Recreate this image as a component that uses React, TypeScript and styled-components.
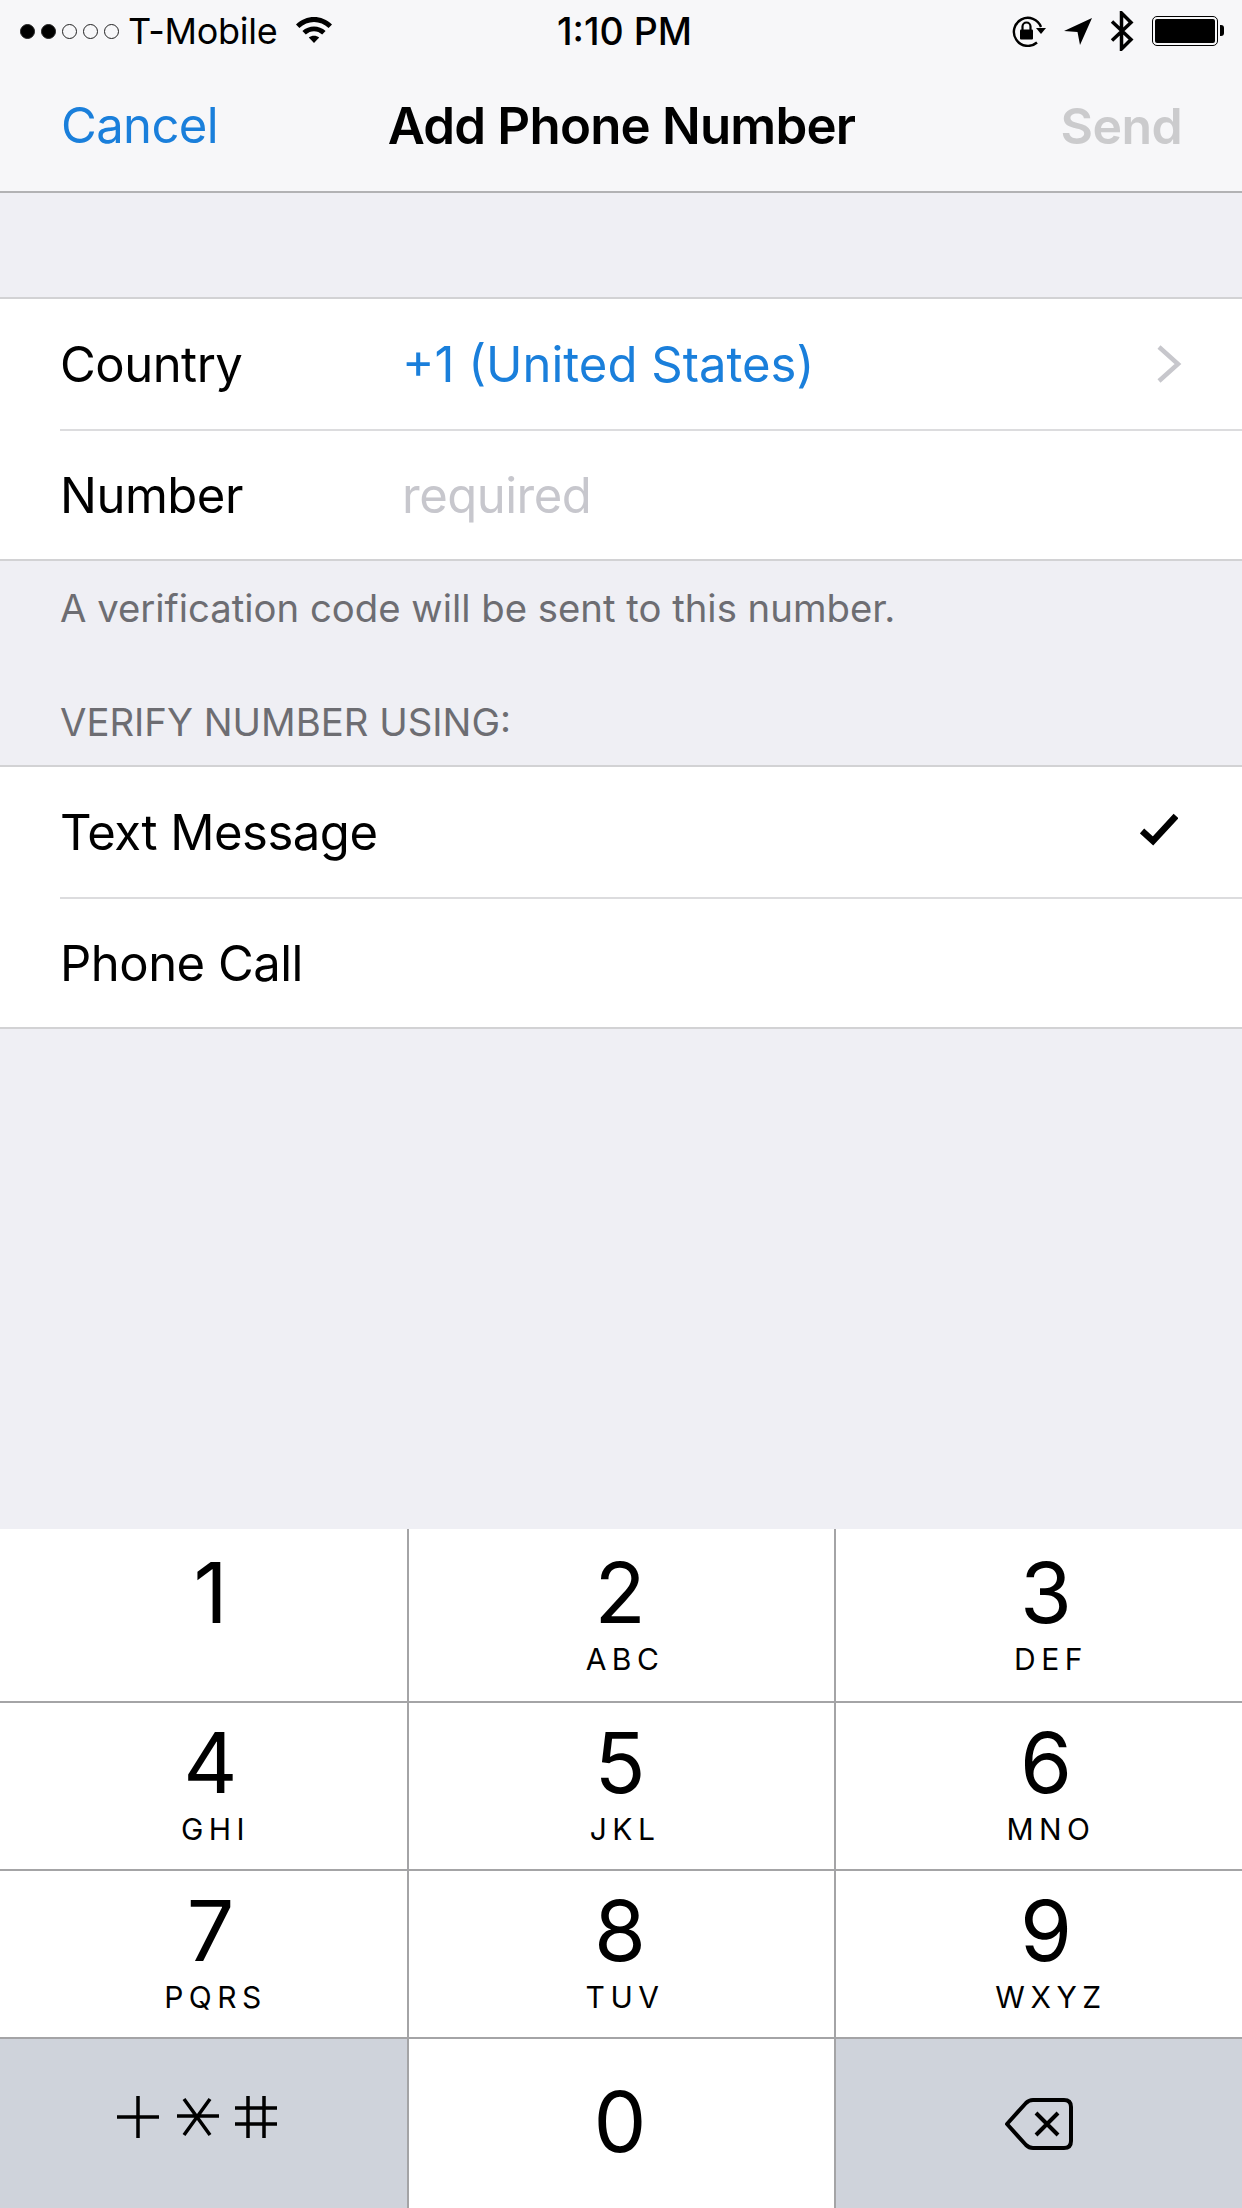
import { FunctionComponent } from "react"
import styled, { createGlobalStyle } from "styled-components"

const GlobalStyle = createGlobalStyle`
  html, body {
    margin: 0;
    padding: 0;
    background: #efeff4;
  }
  * {
    box-sizing: border-box;
  }
`

const KEYS = [
  { digit: "1", letters: "" },
  { digit: "2", letters: "ABC" },
  { digit: "3", letters: "DEF" },
  { digit: "4", letters: "GHI" },
  { digit: "5", letters: "JKL" },
  { digit: "6", letters: "MNO" },
  { digit: "7", letters: "PQRS" },
  { digit: "8", letters: "TUV" },
  { digit: "9", letters: "WXYZ" },
]

const App: FunctionComponent = () => {
  return (
    <Screen>
      <GlobalStyle />
      <Header>
        <StatusBar>
          <StatusLeft>
            <Signal>
              <Dot $on />
              <Dot $on />
              <Dot />
              <Dot />
              <Dot />
            </Signal>
            <Carrier>T-Mobile</Carrier>
            <svg width="38" height="28" viewBox="0 0 38 28">
              <path d="M1 9.5C11 -0.5 27 -0.5 37 9.5L33.6 13C25.5 5 12.5 5 4.4 13Z" />
              <path d="M7.4 16C13.8 10 24.2 10 30.6 16L27.2 19.5C22.5 15 15.5 15 10.8 19.5Z" />
              <path d="M13.8 22.5C16.8 20 21.2 20 24.2 22.5L19 28Z" />
            </svg>
          </StatusLeft>
          <Clock>1:10 PM</Clock>
          <StatusRight>
            <svg width="35" height="31" viewBox="0 0 35 31">
              <path d="M30 11A14 14 0 1 0 26 26.500" fill="none" stroke="#000" strokeWidth="2.4" />
              <path d="M25 12H35L30 18Z" />
              <rect x="9" y="13.500" width="13" height="10" rx="1" />
              <path d="M11.500 14V10.500A4 4 0 0 1 19.500 10.500V14" fill="none" stroke="#000" strokeWidth="2.200" />
            </svg>
            <svg width="28" height="27" viewBox="0 0 28 27">
              <path d="M28 0L16 27L13.500 14L0 13Z" />
            </svg>
            <svg width="24" height="40" viewBox="0 0 24 40">
              <path d="M2 10.500L21 28.500L11.500 38V2L21 11.500L2 29.500" fill="none" stroke="#000" strokeWidth="3.500" />
            </svg>
            <Battery>
              <BatteryFill />
              <BatteryNub />
            </Battery>
          </StatusRight>
        </StatusBar>
        <NavBar>
          <NavAction $tone="#1a7fdb">Cancel</NavAction>
          <NavTitle>Add Phone Number</NavTitle>
          <NavAction $tone="#cbcbcd" $bold>
            Send
          </NavAction>
        </NavBar>
      </Header>

      <Group $top={104}>
        <Row>
          <RowLabel>Country</RowLabel>
          <RowValue>+1 (United States)</RowValue>
          <svg width="26" height="38" viewBox="0 0 26 38">
            <path d="M3 2L22 19L3 36" fill="none" stroke="#c7c7cc" strokeWidth="4.500" />
          </svg>
        </Row>
        <Row>
          <RowLabel>Number</RowLabel>
          <RowValue $placeholder>required</RowValue>
        </Row>
      </Group>

      <FootNote>A verification code will be sent to this number.</FootNote>
      <SectionTitle>VERIFY NUMBER USING:</SectionTitle>

      <Group>
        <Row>
          <RowLabel $grow>Text Message</RowLabel>
          <CheckIcon width="38" height="34" viewBox="0 0 38 34">
            <path d="M2 18L13 28L36 3" fill="none" stroke="#000" strokeWidth="6.500" />
          </CheckIcon>
        </Row>
        <Row>
          <RowLabel $grow>Phone Call</RowLabel>
        </Row>
      </Group>

      <Keypad>
        {KEYS.map((key) => (
          <Key key={key.digit}>
            <Digit>{key.digit}</Digit>
            <Letters>{key.letters}</Letters>
          </Key>
        ))}
        <SideKey>
          <SymbolsIcon width="162" height="44" viewBox="0 0 162 44" fill="none" stroke="#000" strokeWidth="3.500">
            <path d="M1 22H43M22 1V43" />
            <path d="M61 21H103M68 4L94 40M94 4L68 40" />
            <path d="M119 13H161M119 29H161M132 1V43M148 1V43" />
          </SymbolsIcon>
        </SideKey>
        <ZeroKey>
          <Digit>0</Digit>
        </ZeroKey>
        <SideKey>
          <svg width="70" height="52" viewBox="0 0 70 52" fill="none" stroke="#000" strokeWidth="4">
            <path d="M3 26L22 5Q25 2 29 2H60Q67 2 67 9V43Q67 50 60 50H29Q25 50 22 47Z" strokeLinejoin="round" />
            <path d="M32 15L54 37M54 15L32 37" />
          </svg>
        </SideKey>
      </Keypad>
    </Screen>
  )
}

const Screen = styled.div`
  width: 1242px;
  height: 2208px;
  display: flex;
  flex-direction: column;
  overflow: hidden;
  background: #efeff4;
  color: #000;
  font-family: Inter, "Liberation Sans", sans-serif;
`

const Header = styled.header`
  height: 193px;
  flex: none;
  display: flex;
  flex-direction: column;
  background: #f7f7f9;
  border-bottom: 2px solid #b2b2b4;
`

const StatusBar = styled.div`
  height: 62px;
  padding: 0 17px 0 20px;
  display: grid;
  grid-template-columns: 1fr auto 1fr;
  align-items: center;
`

const StatusLeft = styled.div`
  display: flex;
  align-items: center;
  gap: 18px;

  svg {
    margin-top: -5px;
  }
`

const Signal = styled.div`
  display: flex;
  gap: 6px;
  margin-right: -9px;
`

const Dot = styled.span<{ $on?: boolean }>`
  width: 15px;
  height: 15px;
  border-radius: 50%;
  border: 1.5px solid #222;
  background: ${(p) => (p.$on ? "#000" : "transparent")};
`

const Carrier = styled.span`
  font-size: 36px;
  letter-spacing: -0.3px;
`

const Clock = styled.span`
  font-size: 37.5px;
  font-weight: 500;
  padding-left: 4px;
`

const StatusRight = styled.div`
  display: flex;
  align-items: center;
  justify-content: flex-end;
  gap: 18px;
`

const Battery = styled.div`
  position: relative;
  width: 66px;
  height: 30px;
  margin-right: 7px;
  padding: 2px;
  border: 1.5px solid #000;
  border-radius: 5px;
`

const BatteryFill = styled.div`
  height: 100%;
  background: #000;
  border-radius: 2px;
`

const BatteryNub = styled.span`
  position: absolute;
  top: 8px;
  right: -7px;
  width: 4px;
  height: 11px;
  background: #000;
  border-radius: 0 3px 3px 0;
`

const NavBar = styled.div`
  flex: 1;
  padding: 0 60px 2px 61px;
  display: grid;
  grid-template-columns: 1fr auto 1fr;
  align-items: center;

  & > span:last-child {
    justify-self: end;
  }
`

const NavAction = styled.span<{ $tone: string; $bold?: boolean }>`
  font-size: ${(p) => (p.$bold ? 50 : 49)}px;
  letter-spacing: -0.6px;
  color: ${(p) => p.$tone};
  font-weight: ${(p) => (p.$bold ? 600 : 400)};
`

const NavTitle = styled.h1`
  margin: 0;
  font-size: 51px;
  font-weight: 600;
  letter-spacing: -0.8px;
`

const Group = styled.section<{ $top?: number }>`
  flex: none;
  margin-top: ${(p) => p.$top ?? 0}px;
  background: #fff;
  border-top: 2px solid #d2d2d4;
  border-bottom: 2px solid #d2d2d4;
`

const Row = styled.div`
  height: 130px;
  margin-left: 60px;
  padding-right: 60px;
  display: flex;
  align-items: center;

  & + & {
    border-top: 2px solid #dcdcde;
  }
`

const RowLabel = styled.span<{ $grow?: boolean }>`
  font-size: 49px;
  letter-spacing: -0.5px;
  flex: ${(p) => (p.$grow ? "1" : "0 0 342px")};
`

const RowValue = styled.span<{ $placeholder?: boolean }>`
  flex: 1;
  font-size: 49px;
  letter-spacing: ${(p) => (p.$placeholder ? "-0.5px" : "0")};
  color: ${(p) => (p.$placeholder ? "#c7c7cd" : "#1a7fdb")};
`

const CheckIcon = styled.svg`
  margin: 0 4px 4px 0;
`

const FootNote = styled.p`
  margin: 0;
  height: 99px;
  padding: 24px 60px 0;
  font-size: 38.3px;
  color: #6d6d72;
`

const SectionTitle = styled.h2`
  margin: 0;
  height: 105px;
  padding: 39px 60px 0;
  font-size: 38.3px;
  font-weight: 400;
  color: #6d6d72;
`

const Keypad = styled.div`
  margin-top: auto;
  flex: none;
  display: grid;
  grid-template-columns: 407px 427px 408px;
  grid-template-rows: 172px 168px 168px 171px;
  background: #fff;
`

const Key = styled.div`
  display: flex;
  flex-direction: column;
  align-items: center;
  padding-top: 16px;
  border-left: 2px solid #a4a4a6;
  border-top: 2px solid #a4a4a6;

  &:nth-child(3n + 1) {
    border-left: 0;
  }
  &:nth-child(3n + 1),
  &:nth-child(3n) {
    padding-left: 14px;
  }
  &:nth-child(3n + 2) {
    padding-right: 3px;
  }
  &:nth-child(-n + 3) {
    padding-top: 20px;
    border-top: 0;
  }
`

const Digit = styled.span`
  font-size: 84px;
  line-height: 88px;
  font-weight: 400;
`

const Letters = styled.span`
  margin: 4px 0 0 10px;
  font-size: 30px;
  line-height: 36px;
  letter-spacing: 5.5px;
`

const SideKey = styled(Key)`
  justify-content: center;
  background: #cfd3db;

  &&& {
    padding: 0;
  }
`

const ZeroKey = styled(Key)`
  justify-content: center;
  padding: 0 3px 4px 0;
`

const SymbolsIcon = styled.svg`
  margin: 0 14px 14px 0;
`

export default App
